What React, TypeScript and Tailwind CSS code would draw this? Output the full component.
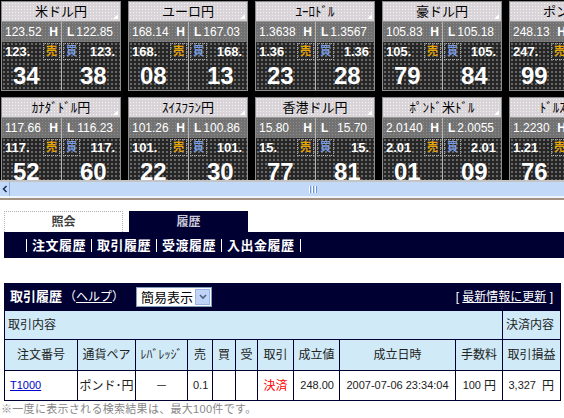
import React from 'react';

type T = { name: string; h: string; l: string; bid: string; ask: string; b: string; a: string };

const row1: T[] = [
  { name: '米ドル円', h: '123.52', l: '122.85', bid: '123.', ask: '123.', b: '34', a: '38' },
  { name: 'ユーロ円', h: '168.14', l: '167.03', bid: '168.', ask: '168.', b: '08', a: '13' },
  { name: 'ﾕｰﾛﾄﾞﾙ', h: '1.3638', l: '1.3567', bid: '1.36', ask: '1.36', b: '23', a: '28' },
  { name: '豪ドル円', h: '105.83', l: '105.18', bid: '105.', ask: '105.', b: '79', a: '84' },
  { name: 'ポンド円', h: '248.13', l: '246.90', bid: '247.', ask: '248.', b: '99', a: '07' },
];
const row2: T[] = [
  { name: 'ｶﾅﾀﾞﾄﾞﾙ円', h: '117.66', l: '116.23', bid: '117.', ask: '117.', b: '52', a: '60' },
  { name: 'ｽｲｽﾌﾗﾝ円', h: '101.26', l: '100.86', bid: '101.', ask: '101.', b: '22', a: '30' },
  { name: '香港ドル円', h: '15.80', l: '15.70', bid: '15.', ask: '15.', b: '77', a: '81' },
  { name: 'ﾎﾟﾝﾄﾞ米ﾄﾞﾙ', h: '2.0140', l: '2.0055', bid: '2.01', ask: '2.01', b: '01', a: '09' },
  { name: 'ﾄﾞﾙｽｲｽﾌﾗﾝ', h: '1.2230', l: '1.2180', bid: '1.21', ask: '1.21', b: '76', a: '80' },
];

function Box({ c, color }: { c: string; color: string }) {
  return (
    <div className={`w-[17px] h-[17px] border border-dotted border-[#a8a8a8] flex items-center justify-center text-[11px] font-bold leading-none ${color}`}>
      {c}
    </div>
  );
}

function Tile({ t }: { t: T }) {
  return (
    <div className="w-[120px] h-[90px] shrink-0 flex flex-col border border-[#8c8c8c] bg-[#262626]">
      <div className="relative h-[19px] bg-[#d8d4d8] bg-[radial-gradient(circle,#f4f0f4_0.7px,transparent_0.9px)] bg-size-[3px_3px] bg-[length:3px_3px] flex items-center justify-center text-[13px] text-black leading-none whitespace-nowrap">
        {t.name}
        <svg className="absolute right-[2px] bottom-[2px]" width="5" height="5" viewBox="0 0 5 5">
          <polygon points="5,0 5,5 0,5" fill="#ffffff" />
        </svg>
      </div>
      <div className="h-[21px] flex bg-[#727272] bg-[radial-gradient(circle,#8e8e8e_0.7px,transparent_0.9px)] bg-size-[3px_3px] bg-[length:3px_3px] text-white text-[12px] leading-none border-t border-[#9a9a9a]">
        <div className="w-[59px] flex items-center justify-between pl-[3px] pr-[3px]">
          <span>{t.h}</span>
          <span className="font-bold">H</span>
        </div>
        <div className="w-px bg-[#b4b4b4]" />
        <div className="flex-1 flex items-center justify-between pl-[5px] pr-[7px]">
          <span className="font-bold">L</span>
          <span>{t.l}</span>
        </div>
      </div>
      <div className="flex-1 flex bg-[radial-gradient(circle,#6a6a6a_0.7px,transparent_0.9px)] bg-size-[4px_4px] bg-[length:4px_4px] text-white">
        <div className="w-[59px] flex flex-col">
          <div className="h-[19px] flex items-center justify-between pl-[3px] pr-[1px]">
            <span className="text-[13px] font-bold leading-none">{t.bid}</span>
            <Box c="売" color="text-[#e8a400]" />
          </div>
          <div className="flex-1 flex items-center pl-[11px] text-[24px] font-bold leading-none">{t.b}</div>
        </div>
        <div className="w-px bg-[#b4b4b4]" />
        <div className="flex-1 flex flex-col">
          <div className="h-[19px] flex items-center justify-between pl-[1px] pr-[5px]">
            <Box c="買" color="text-[#7c9ce0]" />
            <span className="text-[13px] font-bold leading-none">{t.ask}</span>
          </div>
          <div className="flex-1 flex items-center pl-[18px] text-[24px] font-bold leading-none">{t.a}</div>
        </div>
      </div>
    </div>
  );
}

const cols = 'grid grid-cols-[72px_57px_51px_24px_22px_21px_35px_45px_115px_46px_57px] gap-px bg-[#000033] px-px pb-px';

export default function App() {
  return (
    <div className="w-[564px] h-[418px] overflow-hidden bg-white font-['Liberation_Sans','Noto_Sans_CJK_JP',sans-serif]">
      {/* rate frame */}
      <div className="h-[180px] overflow-hidden bg-black">
        <div className="flex flex-col gap-[6px] pt-px pl-px w-max">
          <div className="flex gap-[7px]">
            {row1.map((t) => (
              <Tile key={t.name} t={t} />
            ))}
          </div>
          <div className="flex gap-[7px]">
            {row2.map((t) => (
              <Tile key={t.name} t={t} />
            ))}
          </div>
        </div>
      </div>
      {/* scrollbar */}
      <div className="h-[2px] bg-[#c4c4c4]" />
      <div className="h-[14px] flex bg-[#c2daf8]">
        <div className="w-[10px] flex items-center justify-center border-r border-[#8cacd8]">
          <svg width="6" height="8" viewBox="0 0 6 8">
            <path d="M4.5 1 L1.5 4 L4.5 7" stroke="#1a2a5a" strokeWidth="1.5" fill="none" />
          </svg>
        </div>
        <div className="flex-1 flex items-center pl-[299px]">
          <svg width="9" height="7" viewBox="0 0 9 7">
            <rect x="0" y="0" width="1" height="7" fill="#ffffff" />
            <rect x="1" y="0" width="1" height="7" fill="#6c94d8" />
            <rect x="3" y="0" width="1" height="7" fill="#ffffff" />
            <rect x="4" y="0" width="1" height="7" fill="#6c94d8" />
            <rect x="6" y="0" width="1" height="7" fill="#ffffff" />
            <rect x="7" y="0" width="1" height="7" fill="#6c94d8" />
          </svg>
        </div>
      </div>
      <div className="h-[2px] bg-[#eef4fc]" />
      <div className="h-[2px] bg-[#a39282]" />

      {/* tabs */}
      <div className="mt-[11px] pl-[4px] flex gap-[6px]">
        <div className="w-[119px] h-[21px] border border-b-0 border-dotted border-[#b0b0b0] bg-white flex items-center justify-center text-[12px] font-bold text-[#404040]">
          照会
        </div>
        <div className="w-[119px] h-[21px] bg-[#000033] flex items-center justify-center text-[12px] font-bold text-[#c8c8d8]">
          履歴
        </div>
      </div>
      <div className="ml-[4px] h-[26px] bg-[#000033] flex items-center pl-[22px] text-white text-[13px] font-bold tracking-[0.5px] leading-none">
        <span className="w-px h-[13px] bg-white" />
        <span className="mx-[5px]">注文履歴</span>
        <span className="w-px h-[13px] bg-white" />
        <span className="mx-[5px]">取引履歴</span>
        <span className="w-px h-[13px] bg-white" />
        <span className="mx-[5px]">受渡履歴</span>
        <span className="w-px h-[13px] bg-white" />
        <span className="mx-[5px]">入出金履歴</span>
        <span className="w-px h-[13px] bg-white" />
      </div>

      {/* history table */}
      <div className="mt-[25px] ml-[4px] w-[557px]">
        <div className="h-[28px] bg-[#000033] flex items-center pl-[6px] pr-[8px] text-white">
          <span className="text-[13px] font-bold">取引履歴</span>
          <span className="text-[12px] ml-[2px]">
            （<span className="underline">ヘルプ</span>）
          </span>
          <div className="ml-[12px] w-[76px] h-[20px] bg-white border border-[#7f9db9] flex items-center">
            <span className="flex-1 pl-[4px] text-[13px] text-black leading-none">簡易表示</span>
            <div className="w-[15px] h-[16px] mr-px bg-[#c0d4f8] border border-[#98b4e8] flex items-center justify-center">
              <svg width="8" height="6" viewBox="0 0 8 6">
                <path d="M1 1 L4 4 L7 1" stroke="#4d6185" strokeWidth="1.6" fill="none" />
              </svg>
            </div>
          </div>
          <span className="ml-auto text-[12px]">
            [ <span className="underline">最新情報に更新</span> ]
          </span>
        </div>
        <div className={`${cols} text-[12px] text-[#222]`}>
          <div className="col-span-10 h-[28px] bg-[#d0eaf8] flex items-center pl-[3px]">取引内容</div>
          <div className="h-[28px] bg-[#d0eaf8] flex items-center pl-[3px]">決済内容</div>

          {['注文番号', '通貨ペア', 'ﾚﾊﾞﾚｯｼﾞ', '売', '買', '受', '取引', '成立値', '成立日時', '手数料', '取引損益'].map((h) => (
            <div key={h} className="h-[30px] bg-[#d0eaf8] flex items-center justify-center whitespace-nowrap">
              {h}
            </div>
          ))}

          <div className="h-[29px] bg-white flex items-center pl-[5px] text-[11px]">
            <span className="text-[#0000cc] underline">T1000</span>
          </div>
          <div className="h-[29px] bg-white flex items-center justify-center">ポンド･円</div>
          <div className="h-[29px] bg-white flex items-center justify-center">－</div>
          <div className="h-[29px] bg-white flex items-center pl-[5px] text-[11px]">0.1</div>
          <div className="h-[29px] bg-white" />
          <div className="h-[29px] bg-white" />
          <div className="h-[29px] bg-white flex items-center justify-center text-[#ff0000]">決済</div>
          <div className="h-[29px] bg-white flex items-center justify-end pr-[5px] text-[11px]">248.00</div>
          <div className="h-[29px] bg-white flex items-center justify-center text-[11px] whitespace-nowrap">2007-07-06 23:34:04</div>
          <div className="h-[29px] bg-white flex items-center justify-end pr-[6px] text-[11px] whitespace-nowrap">
            100 <span className="text-[12px] ml-[3px]">円</span>
          </div>
          <div className="h-[29px] bg-white flex items-center justify-end pr-[6px] text-[11px] whitespace-nowrap">
            3,327 <span className="text-[12px] ml-[6px]">円</span>
          </div>
        </div>
      </div>
      <div className="mt-[3px] pl-[1px] text-[11px] text-[#888] tracking-[0.3px] leading-none whitespace-nowrap">
        ※一度に表示される検索結果は、最大100件です。
      </div>
    </div>
  );
}
